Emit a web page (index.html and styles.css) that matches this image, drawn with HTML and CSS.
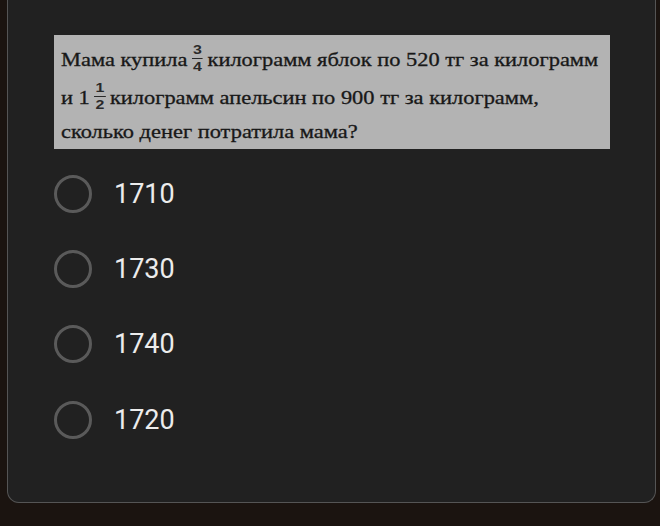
FILE: index.html
```html
<!DOCTYPE html>
<html lang="ru">
<head>
<meta charset="utf-8">
<link rel="stylesheet" href="styles.css">
</head>
<body>
<div class="card">
  <div class="question">
    <div class="q-line">Мама купила <span class="frac"><span class="num">3</span><span class="den">4</span></span> килограмм яблок по 520 тг за килограмм</div>
    <div class="q-line">и 1 <span class="frac"><span class="num">1</span><span class="den">2</span></span> килограмм апельсин по 900 тг за килограмм,</div>
    <div class="q-line last">сколько денег потратила мама?</div>
  </div>
  <ul class="options">
    <li class="option"><span class="radio"></span><span class="label">1710</span></li>
    <li class="option"><span class="radio"></span><span class="label">1730</span></li>
    <li class="option"><span class="radio"></span><span class="label">1740</span></li>
    <li class="option"><span class="radio"></span><span class="label">1720</span></li>
  </ul>
</div>
</body>
</html>
```
FILE: styles.css
```css
html, body {
  margin: 0;
  padding: 0;
  background: #1b1410;
  height: 526px;
  overflow: hidden;
}
.card {
  box-sizing: border-box;
  margin-left: 7px;
  width: 649px;
  height: 503px;
  background: #212121;
  border: 1px solid #555;
  border-top: none;
  border-radius: 0 0 12px 12px;
  padding: 35px 45px 0 46px;
}
.question {
  box-sizing: border-box;
  width: 556px;
  height: 114px;
  background: #b3b3b3;
  padding: 6px 0 0 7px;
  font-family: "Liberation Serif", "Times New Roman", serif;
  font-size: 19px;
  color: #181818;
  white-space: nowrap;
  overflow: hidden;
}
.q-line {
  height: 38px;
  line-height: 38px;
  transform: scaleX(1.18);
  transform-origin: left center;
  -webkit-text-stroke: 0.3px #181818;
}
.q-line.last {
  height: 30px;
  line-height: 30px;
}
.frac {
  display: inline-flex;
  flex-direction: column;
  align-items: center;
  vertical-align: middle;
  font-family: "Liberation Sans", Arial, sans-serif;
  font-weight: bold;
  font-size: 13.5px;
  line-height: 14px;
  color: #2a2a2a;
  margin: 0 -1px 0 -1px;
  position: relative;
  top: -3px;
  -webkit-text-stroke: 0;
}
.frac .num {
  border-bottom: 1.5px solid #2a2a2a;
  padding: 0 1px 1px;
}
.frac .den {
  padding-top: 1px;
}
.options {
  list-style: none;
  margin: 7px 0 0 0;
  padding: 0;
}
.option {
  height: 75.3px;
  display: flex;
  align-items: center;
}
.radio {
  box-sizing: border-box;
  width: 38px;
  height: 38px;
  border: 3px solid #5a5a5a;
  border-radius: 50%;
  flex: none;
}
.label {
  margin-left: 22px;
  font-family: Roboto, "Noto Sans", sans-serif;
  font-size: 27px;
  color: #ececec;
}
```
